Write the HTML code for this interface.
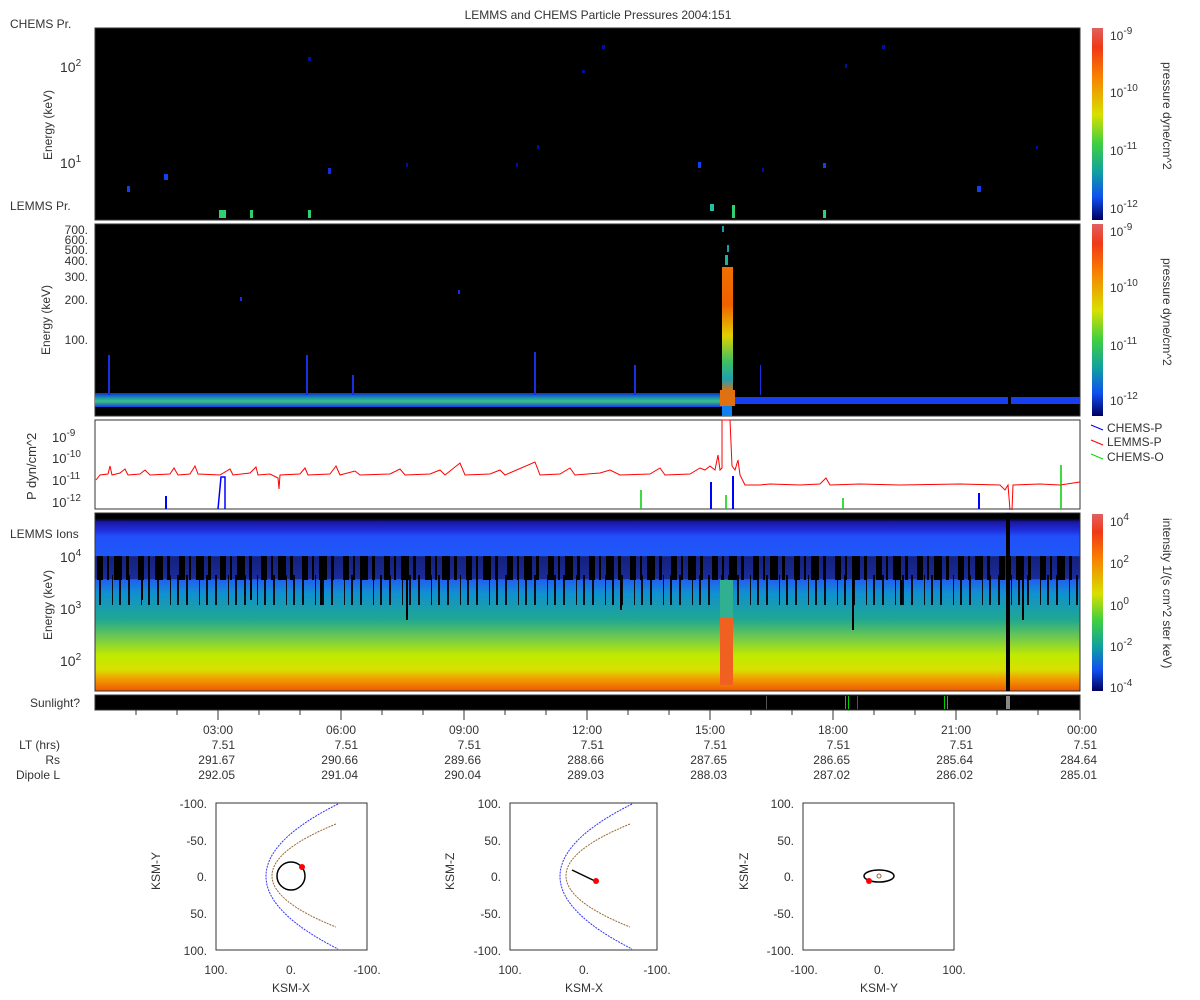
<!DOCTYPE html>
<html><head><meta charset="utf-8"><style>
html,body{margin:0;padding:0;background:#fff;}
svg{display:block;font-family:"Liberation Sans","DejaVu Sans",sans-serif;}
text{fill:#333;font-size:12px;}
</style></head><body>
<svg width="1200" height="1000" viewBox="0 0 1200 1000" xmlns="http://www.w3.org/2000/svg">
<defs>
<linearGradient id="cb" x1="0" y1="0" x2="0" y2="1">
<stop offset="0" stop-color="#e06060"/><stop offset="0.1" stop-color="#f03818"/><stop offset="0.25" stop-color="#f88000"/><stop offset="0.45" stop-color="#d8e000"/><stop offset="0.6" stop-color="#40d040"/><stop offset="0.75" stop-color="#10a0a0"/><stop offset="0.88" stop-color="#1050f0"/><stop offset="1" stop-color="#000060"/>
</linearGradient>
<linearGradient id="ions" x1="0" y1="0" x2="0" y2="1">
<stop offset="0" stop-color="#000"/><stop offset="0.03" stop-color="#000"/><stop offset="0.05" stop-color="#1818a0"/><stop offset="0.1" stop-color="#2030e0"/><stop offset="0.13" stop-color="#2050f8"/><stop offset="0.24" stop-color="#2058f8"/><stop offset="0.245" stop-color="#14207a"/><stop offset="0.37" stop-color="#1a2c9a"/><stop offset="0.375" stop-color="#2060f0"/><stop offset="0.45" stop-color="#1090d0"/><stop offset="0.6" stop-color="#20a890"/><stop offset="0.72" stop-color="#80d040"/><stop offset="0.8" stop-color="#c0ea00"/><stop offset="0.88" stop-color="#d8e000"/><stop offset="0.93" stop-color="#f0a000"/><stop offset="1" stop-color="#f05800"/>
</linearGradient>
<pattern id="blk" x="95" y="0" width="41" height="200" patternUnits="userSpaceOnUse">
<rect x="2" y="0" width="6" height="200" fill="#000"/><rect x="12" y="0" width="2" height="200" fill="#000"/><rect x="19" y="0" width="8" height="200" fill="#000"/><rect x="31" y="0" width="3" height="200" fill="#000"/>
</pattern>
<pattern id="blk2" x="95" y="0" width="29" height="200" patternUnits="userSpaceOnUse">
<rect x="4" y="0" width="2" height="200" fill="#000"/><rect x="17" y="0" width="1" height="200" fill="#000"/><rect x="24" y="0" width="2" height="200" fill="#000"/>
</pattern>
<linearGradient id="band" x1="0" y1="0" x2="0" y2="1">
<stop offset="0" stop-color="#1030e0"/><stop offset="0.4" stop-color="#20a0a0"/><stop offset="0.6" stop-color="#40c080"/><stop offset="1" stop-color="#1040e0"/>
</linearGradient>
<linearGradient id="spk" x1="0" y1="0" x2="0" y2="1">
<stop offset="0" stop-color="#f07000"/><stop offset="0.3" stop-color="#f06000"/><stop offset="0.55" stop-color="#e0d000"/><stop offset="0.75" stop-color="#40c060"/><stop offset="0.9" stop-color="#20a0b0"/><stop offset="1" stop-color="#f07000"/>
</linearGradient>
</defs>

<text x="598" y="19" text-anchor="middle" style="font-size:12px">LEMMS and CHEMS Particle Pressures  2004:151</text>

<!-- Panel 1 -->
<text x="10" y="28">CHEMS Pr.</text>
<rect x="95" y="28" width="985" height="192" fill="#000" stroke="#333" stroke-width="1"/>
<g fill="#1040f0">
<rect x="127" y="186" width="3" height="6"/><rect x="164" y="174" width="4" height="6"/><rect x="328" y="168" width="3" height="6" fill="#1030e0"/><rect x="308" y="57" width="3" height="4" fill="#0010a0"/><rect x="602" y="45" width="3" height="4" fill="#0010a0"/><rect x="582" y="70" width="3" height="3" fill="#0010a0"/><rect x="698" y="162" width="3" height="6"/><rect x="823" y="163" width="3" height="5"/><rect x="977" y="186" width="4" height="6"/><rect x="882" y="45" width="3" height="4" fill="#0010a0"/><rect x="845" y="64" width="2" height="4" fill="#0010a0"/><rect x="1036" y="146" width="2" height="3" fill="#0010a0"/><rect x="537" y="145" width="2" height="4" fill="#0010a0"/><rect x="516" y="163" width="2" height="4" fill="#0010a0"/><rect x="406" y="163" width="2" height="4" fill="#0010a0"/><rect x="762" y="168" width="2" height="4" fill="#0010a0"/>
</g>
<g fill="#30d070"><rect x="219" y="210" width="7" height="8"/><rect x="250" y="210" width="3" height="8"/><rect x="308" y="210" width="3" height="8"/><rect x="710" y="204" width="4" height="7" fill="#20c0a0"/><rect x="732" y="205" width="3" height="13"/><rect x="823" y="210" width="3" height="8"/></g>
<text x="10" y="210">LEMMS Pr.</text>
<text x="60" y="72" style="font-size:14px">10<tspan dy="-6" style="font-size:10px">2</tspan></text>
<text x="60" y="168" style="font-size:14px">10<tspan dy="-6" style="font-size:10px">1</tspan></text>
<text transform="translate(52,160) rotate(-90)">Energy (keV)</text>
<rect x="1092" y="28" width="11" height="192" fill="url(#cb)"/>
<text x="1110" y="40">10<tspan dy="-6" style="font-size:10px">-9</tspan></text>
<text x="1110" y="97">10<tspan dy="-6" style="font-size:10px">-10</tspan></text>
<text x="1110" y="155">10<tspan dy="-6" style="font-size:10px">-11</tspan></text>
<text x="1110" y="213">10<tspan dy="-6" style="font-size:10px">-12</tspan></text>
<text transform="translate(1163,62) rotate(90)">pressure dyne/cm^2</text>

<!-- Panel 2 -->
<rect x="95" y="224" width="985" height="192" fill="#000" stroke="#333"/>
<rect x="95" y="393" width="627" height="14" fill="url(#band)"/>
<rect x="733" y="397" width="347" height="7" fill="#1840f0"/>
<rect x="1008" y="396" width="3" height="9" fill="#000"/>
<rect x="722" y="267" width="11" height="125" fill="url(#spk)"/>
<rect x="720" y="390" width="15" height="16" fill="#e07010"/>
<rect x="722" y="406" width="10" height="10" fill="#1080f0"/>
<rect x="722" y="226" width="2" height="6" fill="#10a0b0"/><rect x="727" y="245" width="2" height="7" fill="#10a0b0"/><rect x="725" y="255" width="3" height="10" fill="#20b0a0"/>
<g fill="#1a30e0"><rect x="108" y="355" width="2" height="40"/><rect x="306" y="355" width="2" height="40"/><rect x="534" y="352" width="2" height="43"/><rect x="352" y="375" width="2" height="20"/><rect x="634" y="365" width="2" height="30"/><rect x="760" y="365" width="1" height="30"/><rect x="240" y="297" width="2" height="4"/><rect x="458" y="290" width="2" height="4"/></g>
<g text-anchor="end" style="font-size:11px"><text x="88" y="234">700.</text><text x="88" y="244">600.</text><text x="88" y="254">500.</text><text x="88" y="265">400.</text><text x="88" y="281">300.</text><text x="88" y="304">200.</text><text x="88" y="344">100.</text></g>
<text transform="translate(50,355) rotate(-90)">Energy (keV)</text>
<rect x="1092" y="224" width="11" height="192" fill="url(#cb)"/>
<text x="1110" y="236">10<tspan dy="-6" style="font-size:10px">-9</tspan></text>
<text x="1110" y="292">10<tspan dy="-6" style="font-size:10px">-10</tspan></text>
<text x="1110" y="350">10<tspan dy="-6" style="font-size:10px">-11</tspan></text>
<text x="1110" y="405">10<tspan dy="-6" style="font-size:10px">-12</tspan></text>
<text transform="translate(1163,258) rotate(90)">pressure dyne/cm^2</text>

<!-- Line panel -->
<rect x="95" y="420" width="985" height="89" fill="#fff" stroke="#333"/>
<path d="M96,480 L100,475 L108,474 L110,466 L112,475 L120,473 L125,469 L128,475 L140,474 L145,470 L150,475 L170,474 L174,468 L178,475 L190,474 L195,466 L198,474 L220,475 L230,469 L233,475 L250,473 L256,467 L258,475 L270,474 L278,478 L279,489 L280,475 L300,474 L305,468 L308,475 L330,474 L336,466 L340,475 L355,471 L360,475 L390,474 L400,469 L405,475 L430,474 L440,470 L445,475 L460,463 L465,475 L490,474 L500,470 L505,475 L535,462 L540,475 L560,474 L570,468 L575,475 L600,473 L610,470 L620,475 L650,474 L660,468 L665,475 L690,474 L700,468 L705,470 L710,466 L715,470 L718,455 L720,470 L722,468 L722,420 L730,420 L732,466 L735,470 L738,460 L740,475 L745,485 L760,485 L770,484 L800,485 L820,484 L826,478 L830,485 L860,484 L900,485 L960,484 L1000,485 L1005,490 L1008,485 L1010,510 M1012,510 L1013,485 L1040,484 L1060,485 L1080,482" fill="none" stroke="#f00" stroke-width="1"/>
<g stroke="#00f" stroke-width="2"><line x1="166" y1="496" x2="166" y2="509"/><line x1="711" y1="482" x2="711" y2="509"/><line x1="733" y1="476" x2="733" y2="509"/><line x1="979" y1="493" x2="979" y2="509"/></g>
<path d="M218,509 L221,477 L225,477 L225,509" fill="none" stroke="#00f" stroke-width="1.5"/>
<g stroke="#0c0" stroke-width="1.5"><line x1="726" y1="495" x2="726" y2="509"/><line x1="641" y1="490" x2="641" y2="509"/><line x1="1061" y1="465" x2="1061" y2="509"/><line x1="843" y1="498" x2="843" y2="509"/></g>
<text x="52" y="442" style="font-size:13px">10<tspan dy="-6" style="font-size:10px">-9</tspan></text>
<text x="52" y="463" style="font-size:13px">10<tspan dy="-6" style="font-size:10px">-10</tspan></text>
<text x="52" y="485" style="font-size:13px">10<tspan dy="-6" style="font-size:10px">-11</tspan></text>
<text x="52" y="507" style="font-size:13px">10<tspan dy="-6" style="font-size:10px">-12</tspan></text>
<text transform="translate(36,500) rotate(-90)" style="font-size:13px">P dyn/cm^2</text>
<line x1="1091" y1="425" x2="1103" y2="430" stroke="#00f"/><text x="1107" y="432">CHEMS-P</text>
<line x1="1091" y1="440" x2="1103" y2="445" stroke="#f00"/><text x="1107" y="446">LEMMS-P</text>
<line x1="1091" y1="454" x2="1103" y2="459" stroke="#0d0"/><text x="1107" y="461">CHEMS-O</text>

<!-- LEMMS ions -->
<rect x="95" y="513" width="985" height="178" fill="url(#ions)" stroke="#333"/>
<rect x="95" y="556" width="985" height="24" fill="url(#blk)"/>
<rect x="95" y="575" width="985" height="30" fill="url(#blk2)" opacity="0.9"/>
<g fill="#000"><rect x="141" y="580" width="2" height="20"/><rect x="250" y="580" width="2" height="20"/><rect x="406" y="580" width="2" height="40"/><rect x="852" y="580" width="2" height="50"/><rect x="1022" y="580" width="2" height="40"/><rect x="620" y="580" width="2" height="30"/><rect x="320" y="580" width="2" height="25"/><rect x="900" y="580" width="2" height="25"/></g>
<rect x="720" y="618" width="13" height="67" fill="#f06020"/>
<rect x="720" y="580" width="13" height="38" fill="#30b090"/>
<rect x="1006" y="513" width="4" height="178" fill="#000"/>
<text x="10" y="538">LEMMS Ions</text>
<text x="60" y="562" style="font-size:14px">10<tspan dy="-6" style="font-size:10px">4</tspan></text>
<text x="60" y="614" style="font-size:14px">10<tspan dy="-6" style="font-size:10px">3</tspan></text>
<text x="60" y="666" style="font-size:14px">10<tspan dy="-6" style="font-size:10px">2</tspan></text>
<text transform="translate(52,640) rotate(-90)">Energy (keV)</text>
<rect x="1092" y="514" width="11" height="177" fill="url(#cb)"/>
<text x="1110" y="526">10<tspan dy="-6" style="font-size:10px">4</tspan></text>
<text x="1110" y="568">10<tspan dy="-6" style="font-size:10px">2</tspan></text>
<text x="1110" y="610">10<tspan dy="-6" style="font-size:10px">0</tspan></text>
<text x="1110" y="651">10<tspan dy="-6" style="font-size:10px">-2</tspan></text>
<text x="1110" y="692">10<tspan dy="-6" style="font-size:10px">-4</tspan></text>
<text transform="translate(1163,518) rotate(90)">intensity 1/(s cm^2 ster keV)</text>

<!-- Sunlight -->
<text x="30" y="707">Sunlight?</text>
<rect x="95" y="695" width="985" height="15" fill="#000" stroke="#333"/>
<g fill="#0c0"><rect x="845" y="696" width="1" height="13"/><rect x="848" y="696" width="1" height="13"/><rect x="944" y="696" width="1" height="13"/><rect x="947" y="696" width="1" height="13"/></g>
<rect x="1006" y="696" width="4" height="13" fill="#888"/>
<rect x="766" y="696" width="1" height="13" fill="#555"/><rect x="857" y="696" width="1" height="13" fill="#555"/>

<g stroke="#333">
<line x1="136" y1="710" x2="136" y2="715"/><line x1="177" y1="710" x2="177" y2="715"/><line x1="218" y1="710" x2="218" y2="720"/><line x1="259" y1="710" x2="259" y2="715"/><line x1="300" y1="710" x2="300" y2="715"/><line x1="341" y1="710" x2="341" y2="720"/><line x1="382" y1="710" x2="382" y2="715"/><line x1="423" y1="710" x2="423" y2="715"/><line x1="464" y1="710" x2="464" y2="720"/><line x1="505" y1="710" x2="505" y2="715"/><line x1="546" y1="710" x2="546" y2="715"/><line x1="587" y1="710" x2="587" y2="720"/><line x1="628" y1="710" x2="628" y2="715"/><line x1="669" y1="710" x2="669" y2="715"/><line x1="710" y1="710" x2="710" y2="720"/><line x1="751" y1="710" x2="751" y2="715"/><line x1="792" y1="710" x2="792" y2="715"/><line x1="833" y1="710" x2="833" y2="720"/><line x1="874" y1="710" x2="874" y2="715"/><line x1="915" y1="710" x2="915" y2="715"/><line x1="956" y1="710" x2="956" y2="720"/><line x1="997" y1="710" x2="997" y2="715"/><line x1="1038" y1="710" x2="1038" y2="715"/><line x1="1080" y1="710" x2="1080" y2="720"/>
</g>
<g text-anchor="end">
<text x="233" y="734">03:00</text><text x="356" y="734">06:00</text><text x="479" y="734">09:00</text><text x="602" y="734">12:00</text><text x="725" y="734">15:00</text><text x="848" y="734">18:00</text><text x="971" y="734">21:00</text><text x="1097" y="734">00:00</text>
<text x="60" y="749">LT (hrs)</text><text x="60" y="764">Rs</text><text x="60" y="779">Dipole L</text>
<text x="235" y="749">7.51</text><text x="358" y="749">7.51</text><text x="481" y="749">7.51</text><text x="604" y="749">7.51</text><text x="727" y="749">7.51</text><text x="850" y="749">7.51</text><text x="973" y="749">7.51</text><text x="1097" y="749">7.51</text>
<text x="235" y="764">291.67</text><text x="358" y="764">290.66</text><text x="481" y="764">289.66</text><text x="604" y="764">288.66</text><text x="727" y="764">287.65</text><text x="850" y="764">286.65</text><text x="973" y="764">285.64</text><text x="1097" y="764">284.64</text>
<text x="235" y="779">292.05</text><text x="358" y="779">291.04</text><text x="481" y="779">290.04</text><text x="604" y="779">289.03</text><text x="727" y="779">288.03</text><text x="850" y="779">287.02</text><text x="973" y="779">286.02</text><text x="1097" y="779">285.01</text>
</g>

<!-- orbit plot 1 -->
<rect x="216" y="803" width="151" height="147" fill="#fff" stroke="#333"/>
<path d="M338,804 Q194,876 338,949" fill="none" stroke="#33f" stroke-dasharray="2,1"/>
<path d="M336,824 Q208,876 336,927" fill="none" stroke="#963" stroke-dasharray="2,1"/>
<circle cx="291" cy="876" r="14" fill="none" stroke="#000" stroke-width="1.5"/>
<circle cx="302" cy="867" r="3" fill="#f00"/>
<g text-anchor="end"><text x="207" y="808">-100.</text><text x="207" y="845">-50.</text><text x="207" y="881">0.</text><text x="207" y="918">50.</text><text x="207" y="955">100.</text></g>
<g text-anchor="middle"><text x="216" y="974">100.</text><text x="291" y="974">0.</text><text x="367" y="974">-100.</text><text x="291" y="992">KSM-X</text></g>
<text transform="translate(160,890) rotate(-90)">KSM-Y</text>

<!-- orbit plot 2 -->
<rect x="510" y="803" width="147" height="147" fill="#fff" stroke="#333"/>
<path d="M632,804 Q488,876 632,949" fill="none" stroke="#33f" stroke-dasharray="2,1"/>
<path d="M630,824 Q502,876 630,927" fill="none" stroke="#963" stroke-dasharray="2,1"/>
<line x1="572" y1="870" x2="597" y2="882" stroke="#000" stroke-width="1.5"/>
<circle cx="596" cy="881" r="3" fill="#f00"/>
<g text-anchor="end"><text x="501" y="808">100.</text><text x="501" y="845">50.</text><text x="501" y="881">0.</text><text x="501" y="918">-50.</text><text x="501" y="955">-100.</text></g>
<g text-anchor="middle"><text x="510" y="974">100.</text><text x="584" y="974">0.</text><text x="657" y="974">-100.</text><text x="584" y="992">KSM-X</text></g>
<text transform="translate(454,890) rotate(-90)">KSM-Z</text>

<!-- orbit plot 3 -->
<rect x="803" y="803" width="151" height="147" fill="#fff" stroke="#333"/>
<ellipse cx="879" cy="876" rx="15" ry="6" fill="none" stroke="#000" stroke-width="1.5"/>
<circle cx="879" cy="876" r="2" fill="none" stroke="#963"/>
<circle cx="869" cy="881" r="3" fill="#f00"/>
<g text-anchor="end"><text x="794" y="808">100.</text><text x="794" y="845">50.</text><text x="794" y="881">0.</text><text x="794" y="918">-50.</text><text x="794" y="955">-100.</text></g>
<g text-anchor="middle"><text x="804" y="974">-100.</text><text x="879" y="974">0.</text><text x="954" y="974">100.</text><text x="879" y="992">KSM-Y</text></g>
<text transform="translate(748,890) rotate(-90)">KSM-Z</text>
</svg>
</body></html>
